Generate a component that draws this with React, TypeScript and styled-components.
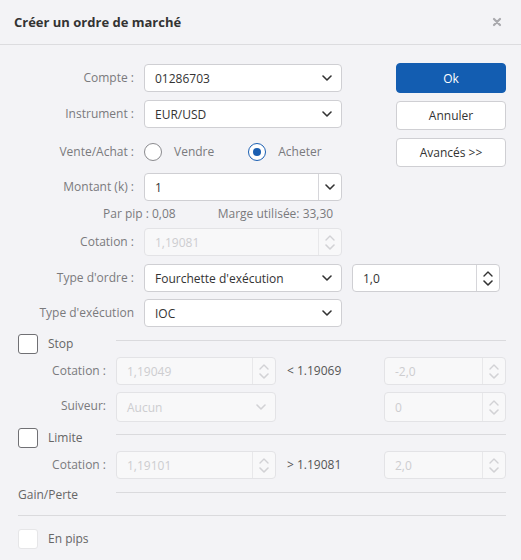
import React from 'react';
import styled, { createGlobalStyle } from 'styled-components';

const GlobalStyle = createGlobalStyle`
  html, body {
    margin: 0;
    padding: 0;
    background: #f3f3f6;
  }
  body {
    font-family: "Open Sans", "Liberation Sans", sans-serif;
    font-size: 12px;
    color: #333;
  }
  * { box-sizing: border-box; }
`;

const Dialog = styled.div`
  width: 521px;
  height: 560px;
  background: #f3f3f6;
  overflow: hidden;
`;

const Header = styled.div`
  height: 45px;
  border-bottom: 1px solid #dcdcdf;
  display: flex;
  align-items: center;
  justify-content: space-between;
  padding: 0 19px 1px 14px;
`;

const Title = styled.h2`
  margin: 0;
  font-size: 13px;
  font-weight: 700;
  color: #333;
`;

const Close = styled.button`
  border: none;
  background: none;
  padding: 0;
  width: 10px;
  height: 10px;
  display: flex;
  cursor: pointer;
`;

const Body = styled.div`
  padding: 19px 15px 0 0;
`;

const TopGrid = styled.div`
  display: grid;
  grid-template-columns: 134px 198px 1fr;
  grid-template-rows: 36px 37px 36px 34px 21px 36px 35px 29px;
  column-gap: 10px;
  align-items: start;
`;

const Label = styled.div<{ $h?: number }>`
  height: ${(p) => p.$h ?? 28}px;
  line-height: ${(p) => p.$h ?? 28}px;
  text-align: right;
  color: #7a7a7d;
  white-space: nowrap;
`;

const Field = styled.div<{ $disabled?: boolean; $width?: number; $h?: number }>`
  height: ${(p) => p.$h ?? 28}px;
  width: ${(p) => (p.$width ? `${p.$width}px` : '100%')};
  display: flex;
  align-items: stretch;
  background: ${(p) => (p.$disabled ? '#f8f8f9' : '#fff')};
  border: 1px solid ${(p) => (p.$disabled ? '#e3e3e6' : '#cfcfd3')};
  border-radius: 4px;
  color: ${(p) => (p.$disabled ? '#cdcdd0' : '#333')};
`;

const Value = styled.span`
  flex: 1;
  display: flex;
  align-items: center;
  padding-left: 10px;
  white-space: nowrap;
`;

const Chevron = styled.span`
  width: 28px;
  display: flex;
  align-items: center;
  justify-content: center;
`;

const Addon = styled.span<{ $disabled?: boolean }>`
  width: 23px;
  display: flex;
  flex-direction: column;
  align-items: center;
  justify-content: center;
  gap: 3px;
  border-left: 1px solid ${(p) => (p.$disabled ? '#e8e8ea' : '#d6d6da')};
`;

const Info = styled.div`
  grid-column: 1 / 3;
  display: flex;
  color: #7a7a7d;
  line-height: 14px;
`;

const InfoItem = styled.span<{ $left: number }>`
  margin-left: ${(p) => p.$left}px;
`;

const Radios = styled.div`
  height: 29px;
  display: flex;
  align-items: center;
`;

const RadioOption = styled.label<{ $gap?: number }>`
  display: flex;
  align-items: center;
  color: #7a7a7d;
  margin-right: ${(p) => p.$gap ?? 0}px;
  cursor: pointer;
`;

const RadioCircle = styled.span<{ $checked?: boolean }>`
  width: 18px;
  height: 18px;
  border-radius: 50%;
  background: #fff;
  border: ${(p) => (p.$checked ? '1.5px solid #1b5fb2' : '1px solid #8a8a8e')};
  display: flex;
  align-items: center;
  justify-content: center;
  margin-right: 12px;
  &::after {
    content: '';
    display: ${(p) => (p.$checked ? 'block' : 'none')};
    width: 8px;
    height: 8px;
    border-radius: 50%;
    background: #1b5fb2;
  }
`;

const Buttons = styled.div`
  grid-column: 3;
  grid-row: 1 / 4;
  justify-self: end;
  width: 110px;
  margin-top: -1px;
  display: flex;
  flex-direction: column;
  gap: 8px;
`;

const Button = styled.button<{ $primary?: boolean }>`
  height: 29px;
  border-radius: 4px;
  font-family: inherit;
  font-size: 12px;
  cursor: pointer;
  background: ${(p) => (p.$primary ? '#135db1' : '#fff')};
  color: ${(p) => (p.$primary ? '#fff' : '#333')};
  border: 1px solid ${(p) => (p.$primary ? '#135db1' : '#cfcfd3')};
  &:first-child {
    height: 30px;
  }
`;

const Bottom = styled.div`
  margin-top: 6px;
  padding-left: 18px;
  display: grid;
  grid-template-columns: 88px 160px 88px 122px;
  grid-template-rows: 23px 35px 36px 23px 34px 30px 14px 20px;
  column-gap: 10px;
  align-items: start;
`;

const SectionHead = styled.div`
  grid-column: 1 / -1;
  display: flex;
  align-items: flex-start;
  height: 20px;
`;

const SectionTitle = styled.label`
  width: 98px;
  display: flex;
  align-items: center;
  gap: 10px;
  color: #666;
  line-height: 20px;
`;

const Box = styled.span<{ $faint?: boolean }>`
  width: 20px;
  height: 20px;
  border-radius: 3px;
  background: #fff;
  border: 1px solid ${(p) => (p.$faint ? '#e6e6e8' : '#707074')};
`;

const Rule = styled.div<{ $top?: number }>`
  flex: 1;
  height: 1px;
  background: #dadadd;
  margin-top: ${(p) => p.$top ?? 6}px;
`;

const FullRule = styled.div`
  grid-column: 1 / -1;
  height: 1px;
  background: #dadadd;
`;

const Quote = styled.div`
  height: 28px;
  line-height: 28px;
  color: #555;
  padding-left: 1px;
`;

const ChevronDown = ({ color = '#333' }: { color?: string }) => (
  <svg width="10" height="6" viewBox="0 0 10 6">
    <path d="M1 1 L5 5 L9 1" fill="none" stroke={color} strokeWidth="1.6" strokeLinecap="round" strokeLinejoin="round" />
  </svg>
);

const ChevronUp = ({ color = '#333' }: { color?: string }) => (
  <svg width="10" height="6" viewBox="0 0 10 6">
    <path d="M1 5 L5 1 L9 5" fill="none" stroke={color} strokeWidth="1.4" strokeLinecap="round" strokeLinejoin="round" />
  </svg>
);

type FieldProps = { value: string; disabled?: boolean; width?: number; h?: number };

const Select = ({ value, disabled, width, h }: FieldProps) => (
  <Field $disabled={disabled} $width={width} $h={h}>
    <Value>{value}</Value>
    <Chevron>
      <ChevronDown color={disabled ? '#d2d2d5' : '#333'} />
    </Chevron>
  </Field>
);

const Combo = ({ value }: { value: string }) => (
  <Field>
    <Value>{value}</Value>
    <Addon>
      <ChevronDown />
    </Addon>
  </Field>
);

const Spinner = ({ value, disabled, width, h }: FieldProps) => {
  const c = disabled ? '#d2d2d5' : '#333';
  return (
    <Field $disabled={disabled} $width={width} $h={h}>
      <Value>{value}</Value>
      <Addon $disabled={disabled}>
        <ChevronUp color={c} />
        <ChevronDown color={c} />
      </Addon>
    </Field>
  );
};

const App: React.FC = () => {
  return (
    <>
      <GlobalStyle />
      <Dialog>
        <Header>
          <Title>Créer un ordre de marché</Title>
          <Close aria-label="Fermer">
            <svg width="10" height="10" viewBox="0 0 10 10">
              <path d="M2 2 L8 8 M8 2 L2 8" stroke="#a9a9ad" strokeWidth="2.2" strokeLinecap="round" />
            </svg>
          </Close>
        </Header>
        <Body>
          <TopGrid>
            <Label>Compte :</Label>
            <Select value="01286703" />
            <Buttons>
              <Button $primary>Ok</Button>
              <Button>Annuler</Button>
              <Button>Avancés &gt;&gt;</Button>
            </Buttons>

            <Label>Instrument :</Label>
            <Select value="EUR/USD" />

            <Label $h={29}>Vente/Achat :</Label>
            <Radios>
              <RadioOption $gap={34}>
                <RadioCircle />
                Vendre
              </RadioOption>
              <RadioOption>
                <RadioCircle $checked />
                Acheter
              </RadioOption>
            </Radios>

            <Label>Montant (k) :</Label>
            <Combo value="1" />
            <div />

            <Info>
              <InfoItem $left={103}>Par pip : 0,08</InfoItem>
              <InfoItem $left={42}>Marge utilisée: 33,30</InfoItem>
            </Info>
            <div />

            <Label>Cotation :</Label>
            <Spinner value="1,19081" disabled />
            <div />

            <Label>Type d'ordre :</Label>
            <Select value="Fourchette d'exécution" />
            <Spinner value="1,0" width={148} />

            <Label>Type d'exécution</Label>
            <Select value="IOC" />
            <div />
          </TopGrid>

          <Bottom>
            <SectionHead>
              <SectionTitle>
                <Box />
                Stop
              </SectionTitle>
              <Rule />
            </SectionHead>

            <Label>Cotation :</Label>
            <Spinner value="1,19049" disabled />
            <Quote>&lt; 1.19069</Quote>
            <Spinner value="-2,0" disabled />

            <Label>Suiveur:</Label>
            <Select value="Aucun" disabled h={30} />
            <div />
            <Spinner value="0" disabled h={30} />

            <SectionHead>
              <SectionTitle>
                <Box />
                Limite
              </SectionTitle>
              <Rule />
            </SectionHead>

            <Label>Cotation :</Label>
            <Spinner value="1,19101" disabled />
            <Quote>&gt; 1.19081</Quote>
            <Spinner value="2,0" disabled />

            <SectionHead>
              <SectionTitle>Gain/Perte</SectionTitle>
              <Rule $top={7} />
            </SectionHead>

            <FullRule />

            <SectionHead>
              <SectionTitle>
                <Box $faint />
                En pips
              </SectionTitle>
            </SectionHead>
          </Bottom>
        </Body>
      </Dialog>
    </>
  );
};

export default App;
